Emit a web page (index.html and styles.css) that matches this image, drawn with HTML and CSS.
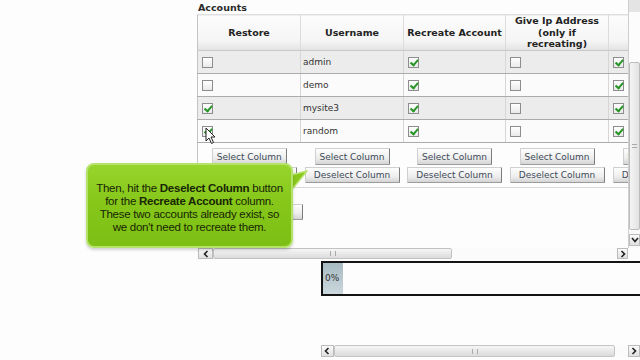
FILE: index.html
```html
<!DOCTYPE html>
<html>
<head>
<meta charset="utf-8">
<link rel="stylesheet" href="styles.css">
</head>
<body>
<div class="screen">
  <div class="top">
    <div class="panel">
      <div class="content">
        <div class="title">Accounts</div>
        <table class="accounts">
          <colgroup>
            <col class="c1"><col class="c2"><col class="c3"><col class="c4"><col class="c5">
          </colgroup>
          <thead>
            <tr>
              <th>Restore</th>
              <th>Username</th>
              <th>Recreate Account</th>
              <th>Give Ip Address<br>(only if<br>recreating)</th>
              <th>Skip<br>Home<br>Directory</th>
            </tr>
          </thead>
          <tbody>
            <tr class="odd">
              <td><span class="cb"></span></td><td class="user">admin</td><td><span class="cb on"></span></td><td><span class="cb"></span></td><td><span class="cb on"></span></td>
            </tr>
            <tr>
              <td><span class="cb"></span></td><td class="user">demo</td><td><span class="cb on"></span></td><td><span class="cb"></span></td><td><span class="cb on"></span></td>
            </tr>
            <tr class="odd">
              <td><span class="cb on"></span></td><td class="user">mysite3</td><td><span class="cb on"></span></td><td><span class="cb"></span></td><td><span class="cb on"></span></td>
            </tr>
            <tr>
              <td><span class="cb on"></span></td><td class="user">random</td><td><span class="cb on"></span></td><td><span class="cb"></span></td><td><span class="cb on"></span></td>
            </tr>
          </tbody>
          <tfoot>
            <tr>
              <td><button class="btn sel">Select Column</button><button class="btn desel">Deselect Column</button></td>
              <td><button class="btn sel">Select Column</button><button class="btn desel">Deselect Column</button></td>
              <td><button class="btn sel">Select Column</button><button class="btn desel">Deselect Column</button></td>
              <td><button class="btn sel">Select Column</button><button class="btn desel">Deselect Column</button></td>
              <td><button class="btn sel">Select Column</button><button class="btn desel">Deselect Column</button></td>
            </tr>
          </tfoot>
        </table>
        <div class="actions"><button class="btn go"></button></div>
      </div>
      <div class="vscroll">
        <div class="v-up"></div>
        <div class="v-gap"></div>
        <div class="v-thumb"><span class="grip-v"></span></div>
        <div class="v-space"></div>
        <div class="arrow v-down"><svg width="8" height="6" viewBox="0 0 8 6"><polyline points="1,1 4,4.5 7,1" fill="none" stroke="#222" stroke-width="1.6"/></svg></div>
      </div>
      <div class="hscroll">
        <div class="arrow h-left"><svg width="6" height="8" viewBox="0 0 6 8"><polyline points="4.5,1 1.5,4 4.5,7" fill="none" stroke="#222" stroke-width="1.6"/></svg></div>
        <div class="h-thumb"><span class="grip-h"></span></div>
        <div class="h-track"></div>
        <div class="arrow h-right"><svg width="6" height="8" viewBox="0 0 6 8"><polyline points="1.5,1 4.5,4 1.5,7" fill="none" stroke="#222" stroke-width="1.6"/></svg></div>
      </div>
      <div class="corner"></div>
    </div>
  </div>

  <div class="progress">
    <div class="fill">0%</div>
  </div>

  <div class="bottom-scroll">
    <div class="arrow b-left"><svg width="6" height="8" viewBox="0 0 6 8"><polyline points="4.5,1 1.5,4 4.5,7" fill="none" stroke="#222" stroke-width="1.6"/></svg></div>
    <div class="b-thumb"><span class="grip-h"></span></div>
    <div class="b-track"></div>
    <div class="arrow b-right"><svg width="6" height="8" viewBox="0 0 6 8"><polyline points="1.5,1 4.5,4 1.5,7" fill="none" stroke="#222" stroke-width="1.6"/></svg></div>
  </div>

  <svg class="tip-arrow" width="24" height="26" viewBox="0 0 24 26">
    <polygon points="0,6 20,1 3,22" fill="#86c71a" stroke="#b9e36e" stroke-width="1.5" stroke-linejoin="round"/>
  </svg>
  <div class="tooltip">
    <p>Then, hit the <b>Deselect Column</b> button<br>for the <b>Recreate Account</b> column.<br>These two accounts already exist, so<br>we don't need to recreate them.</p>
  </div>

  <svg class="cursor" width="12" height="18" viewBox="0 0 12 18">
    <polygon points="1,1 1,14 4,11 6.5,16.5 8.5,15.5 6,10 10,10" fill="#fff" stroke="#222" stroke-width="1" stroke-linejoin="round"/>
  </svg>
</div>
</body>
</html>
```

FILE: styles.css
```css
* { box-sizing: border-box; }

html, body {
  margin: 0;
  padding: 0;
  background: #fdfdfd;
}

.screen {
  position: relative;
  width: 640px;
  height: 360px;
  overflow: hidden;
  background: #fdfdfd;
  font-family: "DejaVu Sans", Verdana, sans-serif;
  color: #333;
}

.top {
  padding-left: 197px;
}

.panel {
  display: grid;
  grid-template-columns: 431px 12px;
  grid-template-rows: 248px 11px;
  width: 443px;
}

.content {
  overflow: hidden;
  background: #fdfdfd;
}

.title {
  height: 14px;
  padding-left: 1px;
  font-size: 9.5px;
  font-weight: bold;
  line-height: 15px;
  color: #2a2a2a;
}

.accounts {
  border-collapse: collapse;
  table-layout: fixed;
  width: 514px;
  border-left: 1px solid #c4c4c4;
}

.c1 { width: 103px; }
.c2 { width: 103px; }
.c3 { width: 102px; }
.c4 { width: 103px; }
.c5 { width: 103px; }

.accounts th {
  height: 36px;
  padding: 0 2px;
  font-size: 9.5px;
  font-weight: bold;
  line-height: 11.5px;
  color: #222;
  text-align: center;
  vertical-align: middle;
  background: linear-gradient(180deg, #fcfcfc 0%, #f5f5f5 72%, #e2e2e2 100%);
  border-top: 1px solid #dedede;
  border-right: 1px solid #dcdcdc;
  border-bottom: 1px solid #c8c8c8;
}

.accounts tbody tr {
  height: 23px;
  background: #fbfbfb;
}

.accounts tbody tr.odd {
  background: #ececec;
}

.accounts td {
  padding: 0 0 0 4px;
  font-size: 9px;
  color: #333;
  vertical-align: middle;
  border-right: 1px solid #d6d6d6;
  border-bottom: 1px solid #acacac;
}

.accounts td.user {
  padding-left: 2px;
}

.cb {
  position: relative;
  display: block;
  width: 11px;
  height: 11px;
  border: 1px solid #8d8d8d;
  background: linear-gradient(180deg, #ffffff, #e9e9e9);
}

.cb.on::after {
  content: "";
  position: absolute;
  left: 3px;
  top: 0.5px;
  width: 3px;
  height: 5.5px;
  border: solid #279627;
  border-width: 0 2px 2px 0;
  transform: rotate(40deg);
}

.accounts tfoot td {
  padding: 5px 0 4px 0;
  text-align: center;
  background: #fdfdfd;
  border-right: none;
  border-bottom: 1px solid #d8d8d8;
}

.btn {
  display: block;
  margin: 0 auto;
  padding: 0;
  font-family: "DejaVu Sans", Verdana, sans-serif;
  font-size: 9px;
  color: #3d4a58;
  background: linear-gradient(180deg, #fdfdfd 0%, #eeeeee 60%, #d4d4d4 100%);
  border: 1px solid #d0d0d0;
  border-right: 1px solid #7c7c7c;
  border-bottom: 1px solid #9c9c9c;
  border-radius: 1px;
}

.btn.sel {
  width: 75px;
  height: 17px;
  margin-bottom: 2px;
}

.btn.desel {
  width: 95px;
  height: 16px;
}

.actions {
  padding: 16px 0 0 11px;
}

.btn.go {
  margin: 0;
  width: 95px;
  height: 16px;
}

/* vertical scrollbar */
.vscroll {
  display: flex;
  flex-direction: column;
  border-left: 1px solid #cfcfcf;
  background: #fafafa;
}

.v-up {
  height: 12px;
  background: #e4e4e4;
}

.v-gap {
  height: 50px;
  background: #fcfcfc;
}

.v-thumb {
  height: 168px;
  display: flex;
  align-items: center;
  justify-content: center;
  background: linear-gradient(90deg, #f4f4f4, #e2e2e2);
  border: 1px solid #bdbdbd;
  border-radius: 2px;
}

.grip-v {
  width: 5px;
  height: 4px;
  border-top: 1px solid #aaa;
  border-bottom: 1px solid #aaa;
}

.v-space { height: 4px; }

.arrow {
  display: flex;
  align-items: center;
  justify-content: center;
  background: linear-gradient(180deg, #fafafa, #e0e0e0);
  border: 1px solid #bcbcbc;
}

.v-down {
  height: 12px;
}

/* horizontal scrollbar */
.hscroll {
  display: flex;
  height: 11px;
  padding-left: 1px;
  background: #fafafa;
}

.h-left { width: 15px; }

.h-thumb {
  width: 239px;
  display: flex;
  align-items: center;
  justify-content: center;
  background: linear-gradient(180deg, #f6f6f6, #dcdcdc);
  border: 1px solid #c2c2c2;
  border-radius: 2px;
}

.grip-h {
  width: 6px;
  height: 5px;
  border-left: 1px solid #aaa;
  border-right: 1px solid #aaa;
}

.h-track {
  width: 165px;
  background: #fbfbfb;
}

.h-right { width: 11px; }

.corner { background: #fdfdfd; }

/* progress */
.progress {
  margin: 2px 0 0 321px;
  width: 330px;
  height: 35px;
  border: 2px solid #141414;
  border-right: none;
  background: #fdfdfd;
}

.fill {
  width: 20px;
  height: 100%;
  padding-left: 2px;
  font-size: 9px;
  line-height: 31px;
  color: #333;
  background: linear-gradient(180deg, #a8bac2, #cbd8dd);
}

/* bottom scrollbar */
.bottom-scroll {
  display: flex;
  margin: 49px 0 0 321px;
  height: 12px;
}

.b-left { width: 13px; }

.b-thumb {
  width: 283px;
  display: flex;
  align-items: center;
  justify-content: center;
  background: linear-gradient(180deg, #f6f6f6, #dadada);
  border: 1px solid #c4c4c4;
  border-radius: 2px;
}

.b-track {
  width: 13px;
  background: #fbfbfb;
}

.b-right { width: 12px; }

/* tooltip overlay */
.tooltip {
  position: absolute;
  left: 86px;
  top: 163px;
  width: 207px;
  height: 85px;
  padding-top: 17px;
  border: 2px solid #b5e26a;
  border-radius: 8px;
  background: linear-gradient(180deg, #98d52c 0%, #86c71a 45%, #7dbf14 100%);
  box-shadow: 0 2px 3px rgba(0, 0, 0, 0.18);
  font-family: "Liberation Sans", Arial, sans-serif;
  font-size: 11.5px;
  line-height: 13px;
  color: #182604;
  text-align: center;
}

.tooltip p {
  margin: 0;
  letter-spacing: -0.25px;
}

.tooltip b {
  font-weight: bold;
}

.tip-arrow {
  position: absolute;
  left: 287px;
  top: 170px;
}

.cursor {
  position: absolute;
  left: 205px;
  top: 127px;
}
```
